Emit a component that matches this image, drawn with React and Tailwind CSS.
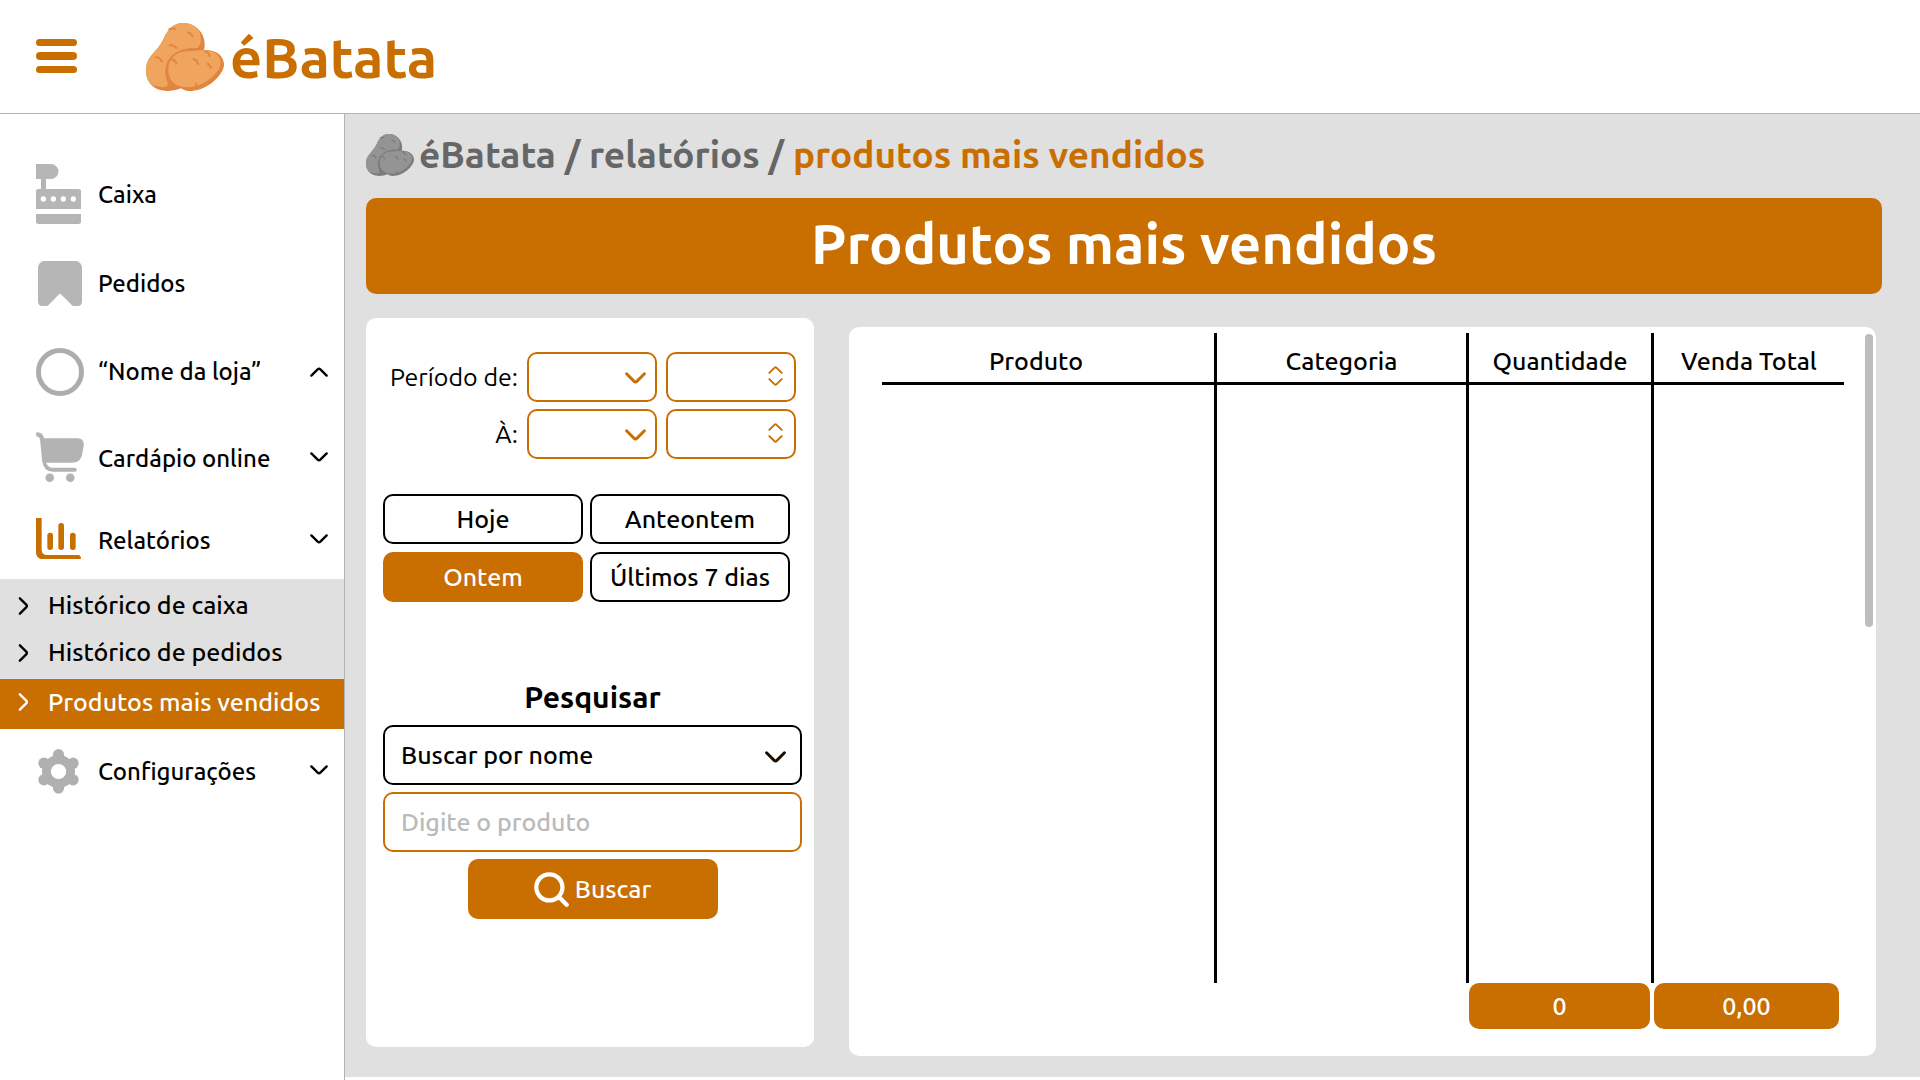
function Potatoes({ className, light, dark }) {
  return (
    <svg className={className} viewBox="18 21 234 204" aria-hidden="true">
      <path
        fill={dark}
        d="M130 21C165 21 194 50 194 84C194 92 193 98 192 102C228 99 252 120 252 146C252 172 207 225 146 225C137 225 129 221 123 217C108 223 96 225 82 225C42 225 18 200 18 166C18 118 50 112 70 70C82 43 98 21 130 21Z"
      />
      <path
        fill={light}
        d="M130 21C152 21 170 31 178 46C186 68 183 86 173 95C155 99 132 93 104 112C80 128 74 156 76 176C78 190 86 203 82 209C76 216 50 212 36 206C25 197 18 183 18 166C18 118 50 112 70 70C82 43 98 21 130 21Z"
      />
      <path
        fill={light}
        d="M85 163C84 128 106 108 142 106C162 105 178 102 196 102C224 102 243 122 242 142C241 166 196 214 142 214C106 214 85 192 85 163Z"
      />
      <g fill="none" stroke={dark} strokeWidth="6" strokeLinecap="butt">
        <path d="M86 41Q97 34 107 40" />
        <path d="M141 50Q155 50 159 64" />
        <path d="M87 88Q103 86 111 98" />
        <path d="M45 124Q61 124 67 139" />
        <path d="M145 97Q152 97 158 104" />
        <path d="M92 129Q104 130 110 144" />
        <path d="M158 128Q171 131 175 146" />
        <path d="M193 105Q207 108 210 123" />
        <path d="M201 142Q211 146 213 158" />
        <path d="M168 201Q171 206 168 215" />
      </g>
    </svg>
  );
}

const DOWN = "M1.500 1.500L8.500 8.500Q10 10 11.500 8.500L18.500 1.500";
const UP = "M1.500 9.500L8.500 2.500Q10 1 11.500 2.500L18.500 9.500";
const RIGHT = "M1.500 1.500L8.500 8.500Q10 10 8.500 11.500L1.500 18.500";

function Chevron({ className, path = DOWN, box = "0 0 20 11", width = 2.6 }) {
  return (
    <svg className={className} viewBox={box} fill="none" stroke="currentColor" strokeWidth={width} strokeLinecap="round" strokeLinejoin="round" aria-hidden="true">
      <path d={path} />
    </svg>
  );
}

function RegisterIcon() {
  return (
    <svg className="mb-[2px] h-[60px] w-[45px]" viewBox="108 72 135 180" fill="#b6b6b6" aria-hidden="true">
      <path d="M108 72H153A22.5 22.5 0 0 1 153 117H138V147H235Q243 147 243 152V207H108V152Q108 147 116 147H123V117H108Z" />
      <path d="M108 222H243V246Q243 252 231 252H120Q108 252 108 246Z" />
      <g fill="#fff">
        <circle cx="130" cy="177" r="8" />
        <circle cx="160" cy="177" r="8" />
        <circle cx="190" cy="177" r="8" />
        <circle cx="220" cy="177" r="8" />
      </g>
    </svg>
  );
}

function BookmarkIcon() {
  return (
    <svg className="ml-[2px] h-[45px] w-[44px]" viewBox="114 363 132 135" fill="#b6b6b6" aria-hidden="true">
      <path d="M132 363H228Q246 366 246 386V484Q246 498 234 498H218L183 463Q180 459 177 463L143 498H126Q114 498 114 484V386Q114 366 132 363Z" />
    </svg>
  );
}

function CircleIcon() {
  return (
    <svg className="size-12" viewBox="0 0 48 48" fill="none" stroke="#adadad" strokeWidth="5" aria-hidden="true">
      <circle cx="24" cy="24" r="21.5" />
    </svg>
  );
}

function CartIcon() {
  return (
    <svg className="mb-1 h-[50px] w-12" viewBox="108 876 144 151" fill="#b3b3b3" aria-hidden="true">
      <path d="M108 877Q128 875 132 895H234Q252 896 252 914L247 944Q242 969 216 969H138Q144 984 158 984H224Q231 985 231 990Q231 996 224 996H158Q130 996 126 962L120 902Q119 889 108 889Z" />
      <circle cx="149" cy="1014" r="13" />
      <circle cx="211" cy="1014" r="13" />
    </svg>
  );
}

function ChartIcon() {
  return (
    <svg className="mb-1 h-[41px] w-[45px]" viewBox="108 84 135 123" fill="#c96e00" aria-hidden="true">
      <path d="M108 84H125V181Q126 194 138 195H237Q243 197 243 207H122Q109 203 108 189Z" />
      <rect x="142" y="128" width="17" height="52" rx="8" />
      <rect x="175" y="99" width="17" height="81" rx="8" />
      <rect x="210" y="128" width="17" height="52" rx="8" />
    </svg>
  );
}

function GearIcon() {
  return (
    <svg className="mb-[2px] ml-[2px] h-[45px] w-[41px]" viewBox="113 777 124 136" fill="#b0b0b0" aria-hidden="true">
      <path
        fillRule="evenodd"
        d="M175 795A50 50 0 1 1 174.900 795ZM175 822A23 23 0 1 0 175.100 822Z"
      />
      <circle cx="175" cy="794" r="17" />
      <circle cx="219" cy="820" r="17" />
      <circle cx="219" cy="870" r="17" />
      <circle cx="175" cy="895" r="17" />
      <circle cx="131" cy="870" r="17" />
      <circle cx="131" cy="820" r="17" />
    </svg>
  );
}

function NavItem({ icon, label, height, arrow }) {
  return (
    <li className={height}>
      <button type="button" className="flex h-full w-full items-center pl-9 pr-4 text-left text-[24px]">
        <span className="w-[62px] shrink-0">{icon}</span>
        <span className="flex-1">{label}</span>
        {arrow && (
          <Chevron
            className={arrow === "up" ? "h-[10px] w-[18px]" : "mb-1 h-[10px] w-[18px]"}
            path={arrow === "up" ? UP : DOWN}
          />
        )}
      </button>
    </li>
  );
}

function SubItem({ label, active }) {
  return (
    <li>
      <a
        href="#"
        aria-current={active ? "page" : undefined}
        className={
          active
            ? "flex h-[50px] items-center bg-[#c96e00] pb-1 pl-[18px] text-white"
            : "flex h-[47px] items-center pl-[18px]"
        }
      >
        <Chevron className="mr-[19px] h-[18px] w-[11px]" path={RIGHT} box="0 0 11 20" />
        {label}
      </a>
    </li>
  );
}

function PeriodRow({ id, label }) {
  return (
    <div className="flex items-center justify-end gap-[9px]">
      <label htmlFor={id} className="font-normal">{label}</label>
      <div className="relative">
        <select id={id} className="h-[50px] w-[130px] appearance-none rounded-[10px] border-2 border-[#c96e00] bg-white px-3">
          <option></option>
        </select>
        <Chevron className="pointer-events-none absolute right-[11px] top-5 h-[12px] w-[21px] text-[#c96e00]" width={2.8} />
      </div>
      <div className="flex h-[50px] w-[130px] items-center rounded-[10px] border-2 border-[#c96e00] text-[#c96e00]">
        <input type="text" inputMode="numeric" aria-label={`${label} horário`} className="h-full min-w-0 flex-1 px-3 outline-none" />
        <div className="mb-[2px] mr-[11px] flex flex-col gap-1">
          <button type="button" aria-label="Aumentar">
            <Chevron className="h-2 w-[15px]" path={UP} />
          </button>
          <button type="button" aria-label="Diminuir">
            <Chevron className="h-2 w-[15px]" />
          </button>
        </div>
      </div>
    </div>
  );
}

function RangeButton({ children, active }) {
  return (
    <button
      type="button"
      className={
        active
          ? "h-[50px] rounded-[10px] border-2 border-[#c96e00] bg-[#c96e00] text-white"
          : "h-[50px] rounded-[10px] border-2 border-black bg-white"
      }
    >
      {children}
    </button>
  );
}

export default function App() {
  return (
    <div className="flex min-h-screen flex-col bg-white font-['Ubuntu','Noto_Sans',sans-serif] text-[25px] font-medium leading-none text-black">
      <header className="flex h-[114px] items-center border-b border-[#b3b3b3] pl-9">
        <button type="button" aria-label="Menu" className="mb-[2px] mr-[69px]">
          <svg className="h-[34px] w-[41px]" viewBox="0 0 41 34" fill="#c96e00" aria-hidden="true">
            <rect y="0" width="41" height="7" rx="3.500" />
            <rect y="13" width="41" height="8" rx="4" />
            <rect y="27" width="41" height="7" rx="3.500" />
          </svg>
        </button>
        <a href="#" className="flex items-center text-[56px] font-bold text-[#c96e00]">
          <Potatoes className="mr-[6px] h-[68px] w-[78px]" light="#f0a55e" dark="#e28540" />
          <span className="pt-[2px]">éBatata</span>
        </a>
      </header>

      <div className="flex flex-1">
        <nav className="w-[345px] shrink-0 border-r border-[#b3b3b3] pt-9">
          <ul>
            <NavItem icon={<RegisterIcon />} label="Caixa" height="h-[89px]" />
            <NavItem icon={<BookmarkIcon />} label="Pedidos" height="h-[89px]" />
            <NavItem icon={<CircleIcon />} label="“Nome da loja”" height="h-[88px]" arrow="up" />
            <NavItem icon={<CartIcon />} label="Cardápio online" height="h-[86px]" arrow="down" />
            <NavItem icon={<ChartIcon />} label="Relatórios" height="h-[77px]" arrow="down" />
            <li>
              <ul className="bg-[#e0e0e0] pt-[3px]">
                <SubItem label="Histórico de caixa" />
                <SubItem label="Histórico de pedidos" />
                <li className="h-[3px]" aria-hidden="true"></li>
                <SubItem label="Produtos mais vendidos" active />
              </ul>
            </li>
            <NavItem icon={<GearIcon />} label="Configurações" height="h-[86px]" arrow="down" />
          </ul>
        </nav>

        <main className="mb-[3px] flex min-w-0 flex-1 flex-col bg-[#e0e0e0] pb-[21px] pl-[21px] pr-[38px]">
          <div className="flex h-[84px] items-center pb-[3px] text-[37px] font-bold text-[#666]">
            <Potatoes className="mr-[5px] h-[42px] w-12" light="#949494" dark="#7c7c7c" />
            <p className="whitespace-pre">
              éBatata / relatórios / <span className="text-[#c96e00]">produtos mais vendidos</span>
            </p>
          </div>
          <h1 className="flex h-24 items-center justify-center rounded-[10px] bg-[#c96e00] pb-[5px] text-[56px] font-bold text-white">
            Produtos mais vendidos
          </h1>

          <div className="flex flex-1 gap-[35px] pr-[6px] pt-6">
            <form className="mb-[9px] flex w-[448px] shrink-0 flex-col rounded-[10px] bg-white pb-6 pl-[17px] pr-3 pt-[34px]">
              <div className="flex flex-col gap-[7px] pr-[6px]">
                <PeriodRow id="inicio" label="Período de:" />
                <PeriodRow id="fim" label="À:" />
              </div>
              <div className="mr-3 mt-[35px] grid grid-cols-2 gap-x-[7px] gap-y-2">
                <RangeButton>Hoje</RangeButton>
                <RangeButton>Anteontem</RangeButton>
                <RangeButton active>Ontem</RangeButton>
                <RangeButton>Últimos 7 dias</RangeButton>
              </div>
              <h2 className="mb-[13px] mt-20 text-center text-[30px] font-bold">Pesquisar</h2>
              <div className="flex flex-col gap-[7px]">
                <div className="relative">
                  <select
                    aria-label="Buscar por"
                    className="h-[60px] w-full appearance-none rounded-[10px] border-2 border-black bg-white px-4"
                  >
                    <option>Buscar por nome</option>
                  </select>
                  <Chevron className="pointer-events-none absolute right-4 top-[26px] h-[12px] w-[21px] text-[#1c0d00]" width={2.8} />
                </div>
                <input
                  type="text"
                  aria-label="Produto"
                  placeholder="Digite o produto"
                  className="h-[60px] w-full rounded-[10px] border-2 border-[#c96e00] bg-white px-4 placeholder:text-[#bababa]"
                />
                <button type="submit" className="flex h-[60px] w-[250px] items-center justify-center gap-[6px] self-center rounded-[10px] bg-[#c96e00] text-white">
                  <svg className="size-[35px]" viewBox="521 632 107 107" fill="none" stroke="#fff" strokeWidth="13" strokeLinecap="round" aria-hidden="true">
                    <circle cx="568" cy="679" r="40" />
                    <path d="M598 709L621 732" />
                  </svg>
                  Buscar
                </button>
              </div>
            </form>

            <section className="mt-[9px] flex min-w-0 flex-1 rounded-[10px] bg-white pb-[27px] pl-[33px] pr-[3px] pt-[6px]">
              <table className="min-w-0 flex-1 table-fixed border-separate border-spacing-0">
                <colgroup>
                  <col />
                  <col className="w-[252px]" />
                  <col className="w-[185px]" />
                  <col className="w-[190px]" />
                </colgroup>
                <thead>
                  <tr className="h-[52px]">
                    <th scope="col" className="border-b-[3px] border-r-[3px] border-black pr-6 pt-2 font-medium">Produto</th>
                    <th scope="col" className="border-b-[3px] border-r-[3px] border-black pt-2 font-medium">Categoria</th>
                    <th scope="col" className="border-b-[3px] border-r-[3px] border-black pt-2 font-medium">Quantidade</th>
                    <th scope="col" className="border-b-[3px] border-black pt-2 font-medium">Venda Total</th>
                  </tr>
                </thead>
                <tbody>
                  <tr className="h-[598px]">
                    <td className="border-r-[3px] border-black"></td>
                    <td className="border-r-[3px] border-black"></td>
                    <td className="border-r-[3px] border-black"></td>
                    <td></td>
                  </tr>
                </tbody>
                <tfoot>
                  <tr className="text-center text-white">
                    <td></td>
                    <td></td>
                    <td className="p-0 pr-1">
                      <div className="flex h-[46px] items-center justify-center rounded-[10px] bg-[#c96e00]">0</div>
                    </td>
                    <td className="p-0 pr-[5px]">
                      <div className="flex h-[46px] items-center justify-center rounded-[10px] bg-[#c96e00]">0,00</div>
                    </td>
                  </tr>
                </tfoot>
              </table>
              <div className="ml-[21px] mt-px h-[293px] w-2 rounded-full bg-[#bdbdbd]"></div>
            </section>
          </div>
        </main>
      </div>
    </div>
  );
}
